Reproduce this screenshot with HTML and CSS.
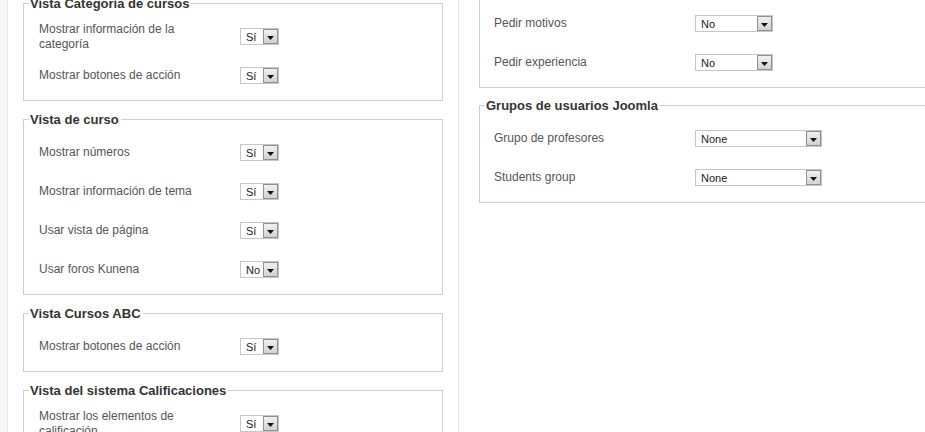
FILE: index.html
```html
<!DOCTYPE html>
<html lang="es">
<head>
  <meta charset="UTF-8">
  <meta name="viewport" content="width=device-width, initial-scale=1.0">
  <title>Configuración de cursos</title>
  <link rel="stylesheet" href="styles.css">
</head>
<body>
  <div class="page">

    <div class="col col-left">
      <fieldset class="group">
        <legend>Vista Categoría de cursos</legend>
        <div class="row">
          <span class="label">Mostrar información de la categoría</span>
          <span class="select sel-small"><span>Sí</span><span class="arrow"><svg width="7" height="4" viewBox="0 0 7 4"><path d="M0 0h7L3.5 4z"/></svg></span></span>
        </div>
        <div class="row">
          <span class="label">Mostrar botones de acción</span>
          <span class="select sel-small"><span>Sí</span><span class="arrow"><svg width="7" height="4" viewBox="0 0 7 4"><path d="M0 0h7L3.5 4z"/></svg></span></span>
        </div>
      </fieldset>

      <fieldset class="group">
        <legend>Vista de curso</legend>
        <div class="row">
          <span class="label">Mostrar números</span>
          <span class="select sel-small"><span>Sí</span><span class="arrow"><svg width="7" height="4" viewBox="0 0 7 4"><path d="M0 0h7L3.5 4z"/></svg></span></span>
        </div>
        <div class="row">
          <span class="label">Mostrar información de tema</span>
          <span class="select sel-small"><span>Sí</span><span class="arrow"><svg width="7" height="4" viewBox="0 0 7 4"><path d="M0 0h7L3.5 4z"/></svg></span></span>
        </div>
        <div class="row">
          <span class="label">Usar vista de página</span>
          <span class="select sel-small"><span>Sí</span><span class="arrow"><svg width="7" height="4" viewBox="0 0 7 4"><path d="M0 0h7L3.5 4z"/></svg></span></span>
        </div>
        <div class="row">
          <span class="label">Usar foros Kunena</span>
          <span class="select sel-small"><span>No</span><span class="arrow"><svg width="7" height="4" viewBox="0 0 7 4"><path d="M0 0h7L3.5 4z"/></svg></span></span>
        </div>
      </fieldset>

      <fieldset class="group">
        <legend>Vista Cursos ABC</legend>
        <div class="row">
          <span class="label">Mostrar botones de acción</span>
          <span class="select sel-small"><span>Sí</span><span class="arrow"><svg width="7" height="4" viewBox="0 0 7 4"><path d="M0 0h7L3.5 4z"/></svg></span></span>
        </div>
      </fieldset>

      <fieldset class="group">
        <legend>Vista del sistema Calificaciones</legend>
        <div class="row">
          <span class="label">Mostrar los elementos de calificación</span>
          <span class="select sel-small"><span>Sí</span><span class="arrow"><svg width="7" height="4" viewBox="0 0 7 4"><path d="M0 0h7L3.5 4z"/></svg></span></span>
        </div>
      </fieldset>
    </div>

    <div class="col col-right">
      <fieldset class="group group-top">
        <div class="row">
          <span class="label">Pedir motivos</span>
          <span class="select sel-mid"><span>No</span><span class="arrow"><svg width="7" height="4" viewBox="0 0 7 4"><path d="M0 0h7L3.5 4z"/></svg></span></span>
        </div>
        <div class="row">
          <span class="label">Pedir experiencia</span>
          <span class="select sel-mid"><span>No</span><span class="arrow"><svg width="7" height="4" viewBox="0 0 7 4"><path d="M0 0h7L3.5 4z"/></svg></span></span>
        </div>
      </fieldset>

      <fieldset class="group">
        <legend>Grupos de usuarios Joomla</legend>
        <div class="row">
          <span class="label">Grupo de profesores</span>
          <span class="select sel-wide"><span>None</span><span class="arrow"><svg width="7" height="4" viewBox="0 0 7 4"><path d="M0 0h7L3.5 4z"/></svg></span></span>
        </div>
        <div class="row">
          <span class="label">Students group</span>
          <span class="select sel-wide"><span>None</span><span class="arrow"><svg width="7" height="4" viewBox="0 0 7 4"><path d="M0 0h7L3.5 4z"/></svg></span></span>
        </div>
      </fieldset>
    </div>

  </div>
</body>
</html>
```

FILE: styles.css
```css
body {
  margin: 0;
  background: #f6f6f6;
  font-family: Arial, "Liberation Sans", sans-serif;
  overflow: hidden;
}
.page {
  display: flex;
  height: 432px;
  padding-left: 7px;
}
.col {
  background: #fff;
}
.col-left {
  flex: none;
  width: 420px;
  padding: 0 15px;
  border-left: 1px solid #e8e8e8;
  border-right: 1px solid #e2e2e2;
}
.col-left .group:first-child {
  margin-top: -4px;
}
.col-right {
  flex: 1;
  padding-left: 20px;
  min-width: 0;
}
.col-right .group {
  width: 470px;
}
.col-right .row {
  padding-left: 9px;
}
.col-right .group-top {
  margin-top: -3px;
  margin-bottom: 10px;
}

/* fieldset boxes */
.group {
  margin: 0 0 11px;
  padding: 6px 5px 5px;
  border: 1px solid #cfcfcf;
  min-width: 0;
}
.group legend {
  padding: 0 2px 0 1px;
  font-size: 13px;
  line-height: 15px;
  font-weight: bold;
  color: #333;
}

/* label + control rows */
.row {
  display: flex;
  align-items: center;
  min-height: 39px;
  padding-left: 10px;
}
.label {
  flex: none;
  width: 201px;
  padding-right: 26px;
  box-sizing: border-box;
  font-size: 12px;
  line-height: 15px;
  color: #555;
}

/* fake drop-down */
.select {
  display: inline-flex;
  align-items: center;
  justify-content: space-between;
  box-sizing: border-box;
  height: 17px;
  padding-left: 5px;
  border: 1px solid #c6c6c6;
  background: #fff;
  font-size: 11px;
  color: #222;
}
.sel-small { width: 39px; }
.sel-mid { width: 78px; }
.sel-wide { width: 127px; }
.arrow {
  display: flex;
  align-items: center;
  justify-content: center;
  box-sizing: border-box;
  width: 15px;
  height: 15px;
  border: 1px solid #8f8f8f;
  background: linear-gradient(#f0f0f0, #d2d2d2);
}
.arrow svg {
  fill: #111;
  margin-top: 2px;
}
```
